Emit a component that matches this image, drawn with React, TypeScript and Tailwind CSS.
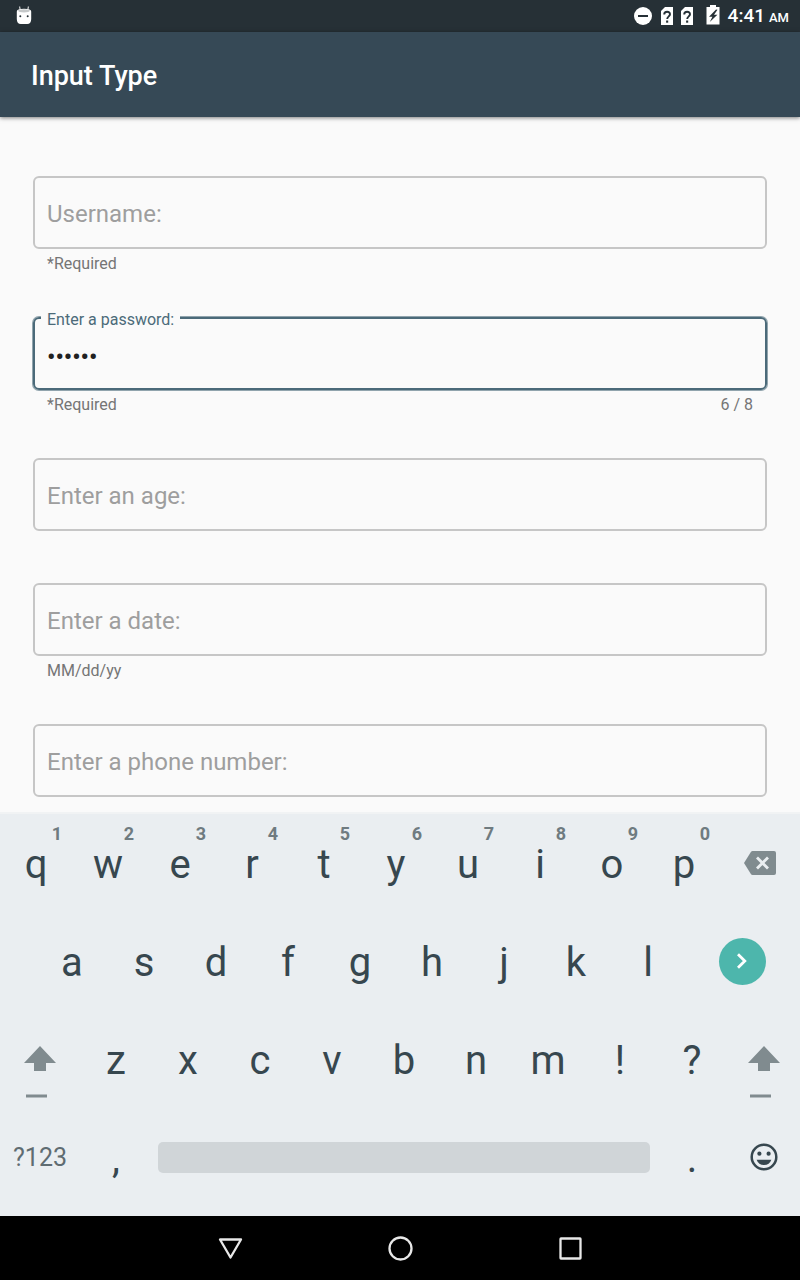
import { useState } from 'react';
import type { ReactNode } from 'react';
import clsx from 'clsx';

type FieldSpec = {
  id: string;
  label: string;
  type: string;
  helper?: string;
  max?: number;
};

const FIELDS: FieldSpec[] = [
  { id: 'username', label: 'Username:', type: 'text', helper: '*Required' },
  { id: 'password', label: 'Enter a password:', type: 'password', helper: '*Required', max: 8 },
  { id: 'age', label: 'Enter an age:', type: 'text' },
  { id: 'date', label: 'Enter a date:', type: 'text', helper: 'MM/dd/yy' },
  { id: 'phone', label: 'Enter a phone number:', type: 'tel' },
];

function StatusBar() {
  return (
    <header className="flex h-8 items-center justify-between bg-[#263036] pr-[11px] pl-4 text-white">
      <svg width="16" height="20" viewBox="0 0 16 20" aria-hidden="true">
        <path d="M3.500 .5l1 4.500M12.500 .5l-1 4.500" stroke="#c9cccd" strokeWidth="1.200" />
        <path d="M.8 5.500Q.8 2.800 8 2.800t7.200 2.700V13q0 5-4 5H4.800q-4 0-4-5z" fill="#fff" />
        <ellipse cx="8" cy="4.800" rx="6" ry="1.600" fill="#c5c8c9" />
        <circle cx="4.300" cy="10.300" r="1" fill="#263036" />
        <circle cx="11.700" cy="10.300" r="1" fill="#263036" />
      </svg>
      <div className="flex items-center">
        <svg width="18" height="18" viewBox="0 0 18 18" aria-hidden="true">
          <circle cx="9" cy="9" r="9" fill="#fff" />
          <path d="M4 9h10" stroke="#263036" strokeWidth="2" />
        </svg>
        <div className="mr-[13px] ml-[9px] flex gap-2">
          <SimIcon />
          <SimIcon />
        </div>
        <svg className="mr-2 mb-0.5" width="14" height="20" viewBox="0 0 14 20" aria-hidden="true">
          <path d="M4 0h6v2h3.500v17.500H.5V2H4z" fill="#fff" />
          <path d="M10 4.500L3 11.800h3.400L3.800 17 11.400 9.800H8L11.500 4.800z" fill="#263036" />
        </svg>
        <span className="text-[19px] leading-8 font-medium">4:41</span>
        <span className="ml-1 pt-1 text-[13px] leading-7 font-medium">AM</span>
      </div>
    </header>
  );
}

function SimIcon() {
  return (
    <svg width="12" height="18" viewBox="0 0 12 18" aria-hidden="true">
      <path d="M4 0h8v18H0V4z" fill="#fff" />
      <path d="M3.200 7.500q0-2.700 2.900-2.700T9 7.300c0 2-2.800 2.200-2.800 4.700" fill="none" stroke="#263036" strokeWidth="1.900" />
      <path d="M5.100 13.500h2.100v2.200H5.100z" fill="#263036" />
    </svg>
  );
}

function Field({
  spec,
  value,
  focused,
  onChange,
  onFocus,
}: {
  spec: FieldSpec;
  value: string;
  focused: boolean;
  onChange: (value: string) => void;
  onFocus: () => void;
}) {
  const floating = focused || value.length > 0;
  return (
    <div>
      <div className="relative">
        <input
          id={spec.id}
          type={spec.type}
          value={value}
          maxLength={spec.max}
          onChange={(e) => onChange(e.target.value)}
          onFocus={onFocus}
          className={clsx(
            'block h-[73px] w-full rounded-md border-2 bg-transparent px-3 pt-1.5 text-2xl text-[#212121] outline-none',
            spec.type === 'password' && 'font-medium',
            focused ? 'border-[#4b6a79] ring-1 ring-[#4b6a79]/60' : 'border-[#c6c6c6]',
          )}
        />
        <label
          htmlFor={spec.id}
          className={clsx(
            'pointer-events-none absolute left-2 bg-[#fafafa] px-1.5',
            floating ? '-top-[7px] text-base leading-5' : 'top-[22px] text-2xl leading-8',
            focused ? 'text-[#4b6a79]' : 'text-[#9e9e9e]',
          )}
        >
          {spec.label}
        </label>
      </div>
      <div className="flex min-h-3 justify-between px-3.5 pb-px text-base leading-6 text-[#757575]">
        {spec.helper && <span className="pt-[3px]">{spec.helper}</span>}
        {spec.max && (
          <span className="pt-[3px]">
            {value.length} / {spec.max}
          </span>
        )}
      </div>
    </div>
  );
}

function Key({ children, hint, onPress }: { children: string; hint?: string; onPress: (c: string) => void }) {
  return (
    <button
      type="button"
      onClick={() => onPress(children)}
      className="relative flex h-full w-[9%] items-center justify-center pt-1 text-[40px] leading-10 text-[#37474f]"
    >
      {children}
      {hint && <span className="absolute top-2.5 right-2.5 text-lg leading-5 font-bold text-[#6f7b80]">{hint}</span>}
    </button>
  );
}

function Row({ children }: { children: ReactNode }) {
  return <div className="flex h-[98px] items-center">{children}</div>;
}

function ShiftKey({ className, label }: { className: string; label: string }) {
  return (
    <button
      type="button"
      aria-label={label}
      className={clsx('flex h-full flex-col items-center justify-center pt-7 text-[#808b8f]', className)}
    >
      <svg width="32" height="54" viewBox="0 0 32 54" aria-hidden="true" fill="currentColor">
        <path d="M16 0l16 17H22v8H10v-8H0z" />
        <path d="M2 48.500h21v3H2z" />
      </svg>
    </button>
  );
}

function Keyboard({ onPress, onDelete, onNext }: { onPress: (c: string) => void; onDelete: () => void; onNext: () => void }) {
  return (
    <section aria-label="Keyboard" className="border-t-2 border-[#f1f3f4] bg-[#eaeef1] pb-2.5">
      <Row>
        {[...'qwertyuiop'].map((c, i) => (
          <Key key={c} hint={String((i + 1) % 10)} onPress={onPress}>
            {c}
          </Key>
        ))}
        <button type="button" aria-label="Delete" onClick={onDelete} className="flex h-full w-[10%] items-center justify-center">
          <svg width="32" height="24" viewBox="0 0 32 24" aria-hidden="true">
            <path d="M8.500 0H30a2 2 0 012 2v20a2 2 0 01-2 2H8.500q-1 0-1.600-.9L0 12 6.900.9Q7.500 0 8.500 0z" fill="#808b8f" />
            <path d="M13 6.500l11 11M24 6.500l-11 11" stroke="#eaeef1" strokeWidth="2.800" />
          </svg>
        </button>
      </Row>
      <Row>
        <div className="w-[4.5%]" />
        {[...'asdfghjkl'].map((c) => (
          <Key key={c} onPress={onPress}>
            {c}
          </Key>
        ))}
        <div className="flex flex-1 justify-center">
          <button type="button" aria-label="Next" onClick={onNext} className="flex size-[47px] items-center justify-center rounded-full bg-[#4db6ac]">
            <svg width="12" height="18" viewBox="0 0 12 18" aria-hidden="true">
              <path d="M2 2.200l6.800 6.800L2 15.800" fill="none" stroke="#fff" strokeWidth="2.800" />
            </svg>
          </button>
        </div>
      </Row>
      <Row>
        <ShiftKey className="w-[10%]" label="Left shift" />
        {[...'zxcvbnm!?'].map((c) => (
          <Key key={c} onPress={onPress}>
            {c}
          </Key>
        ))}
        <ShiftKey className="w-[9%]" label="Right shift" />
      </Row>
      <Row>
        <button type="button" className="h-full w-[10%] pt-0.5 text-[25px] leading-8 text-[#5f6c72]">
          ?123
        </button>
        <Key onPress={onPress}>,</Key>
        <div className="w-[63%] px-1.5">
          <button type="button" aria-label="Space" onClick={() => onPress(' ')} className="block h-[31px] w-full rounded-[5px] bg-[#d0d5d8]" />
        </div>
        <Key onPress={onPress}>.</Key>
        <button type="button" aria-label="Emoji" className="flex h-full w-[9%] items-center justify-center">
          <svg width="28" height="28" viewBox="0 0 28 28" aria-hidden="true" fill="#37474f">
            <circle cx="14" cy="14" r="12.300" fill="none" stroke="#37474f" strokeWidth="2.500" />
            <circle cx="9.400" cy="10.700" r="2.100" />
            <circle cx="18.600" cy="10.700" r="2.100" />
            <path d="M6.600 16.700h14.800q-2 5.300-7.400 5.300t-7.400-5.300z" />
          </svg>
        </button>
      </Row>
    </section>
  );
}

function NavBar() {
  const shapes: [string, ReactNode][] = [
    ['Back', <path key="b" d="M4 5.500h21L14.500 23.500z" />],
    ['Home', <circle key="h" cx="14.500" cy="14.500" r="11" />],
    ['Overview', <rect key="o" x="4.500" y="4.500" width="20" height="20" rx="0.500" />],
  ];
  return (
    <nav className="flex h-16 items-center justify-center gap-[142px] bg-black">
      {shapes.map(([name, shape]) => (
        <button key={name} type="button" aria-label={name}>
          <svg width="28" height="28" viewBox="0 0 28 28" fill="none" stroke="#e8e8e8" strokeWidth="2.300" strokeLinejoin="round" aria-hidden="true">
            {shape}
          </svg>
        </button>
      ))}
    </nav>
  );
}

export default function App() {
  const [values, setValues] = useState<Record<string, string>>({ password: 'secret' });
  const [active, setActive] = useState('password');

  const update = (id: string, next: string) => {
    const max = FIELDS.find((f) => f.id === id)?.max;
    setValues((v) => ({ ...v, [id]: max ? next.slice(0, max) : next }));
  };
  const current = values[active] ?? '';
  const goNext = () => {
    const i = FIELDS.findIndex((f) => f.id === active);
    setActive(FIELDS[(i + 1) % FIELDS.length].id);
  };

  return (
    <div className="flex min-h-screen flex-col bg-[#fafafa] font-[Roboto,sans-serif]">
      <StatusBar />
      <div className="flex h-[85px] items-center bg-[#364956] px-[31px] pt-0.5 shadow-[0_1px_4px_rgba(0,0,0,0.5)]">
        <h1 className="text-[27px] leading-8 font-medium text-white">Input Type</h1>
      </div>
      <main className="flex-1 px-[33px] pt-[59px]">
        <form className="flex flex-col gap-10" onSubmit={(e) => e.preventDefault()}>
          {FIELDS.map((f) => (
            <Field
              key={f.id}
              spec={f}
              value={values[f.id] ?? ''}
              focused={active === f.id}
              onChange={(v) => update(f.id, v)}
              onFocus={() => setActive(f.id)}
            />
          ))}
        </form>
      </main>
      <Keyboard
        onPress={(c) => update(active, current + c)}
        onDelete={() => update(active, current.slice(0, -1))}
        onNext={goNext}
      />
      <NavBar />
    </div>
  );
}
